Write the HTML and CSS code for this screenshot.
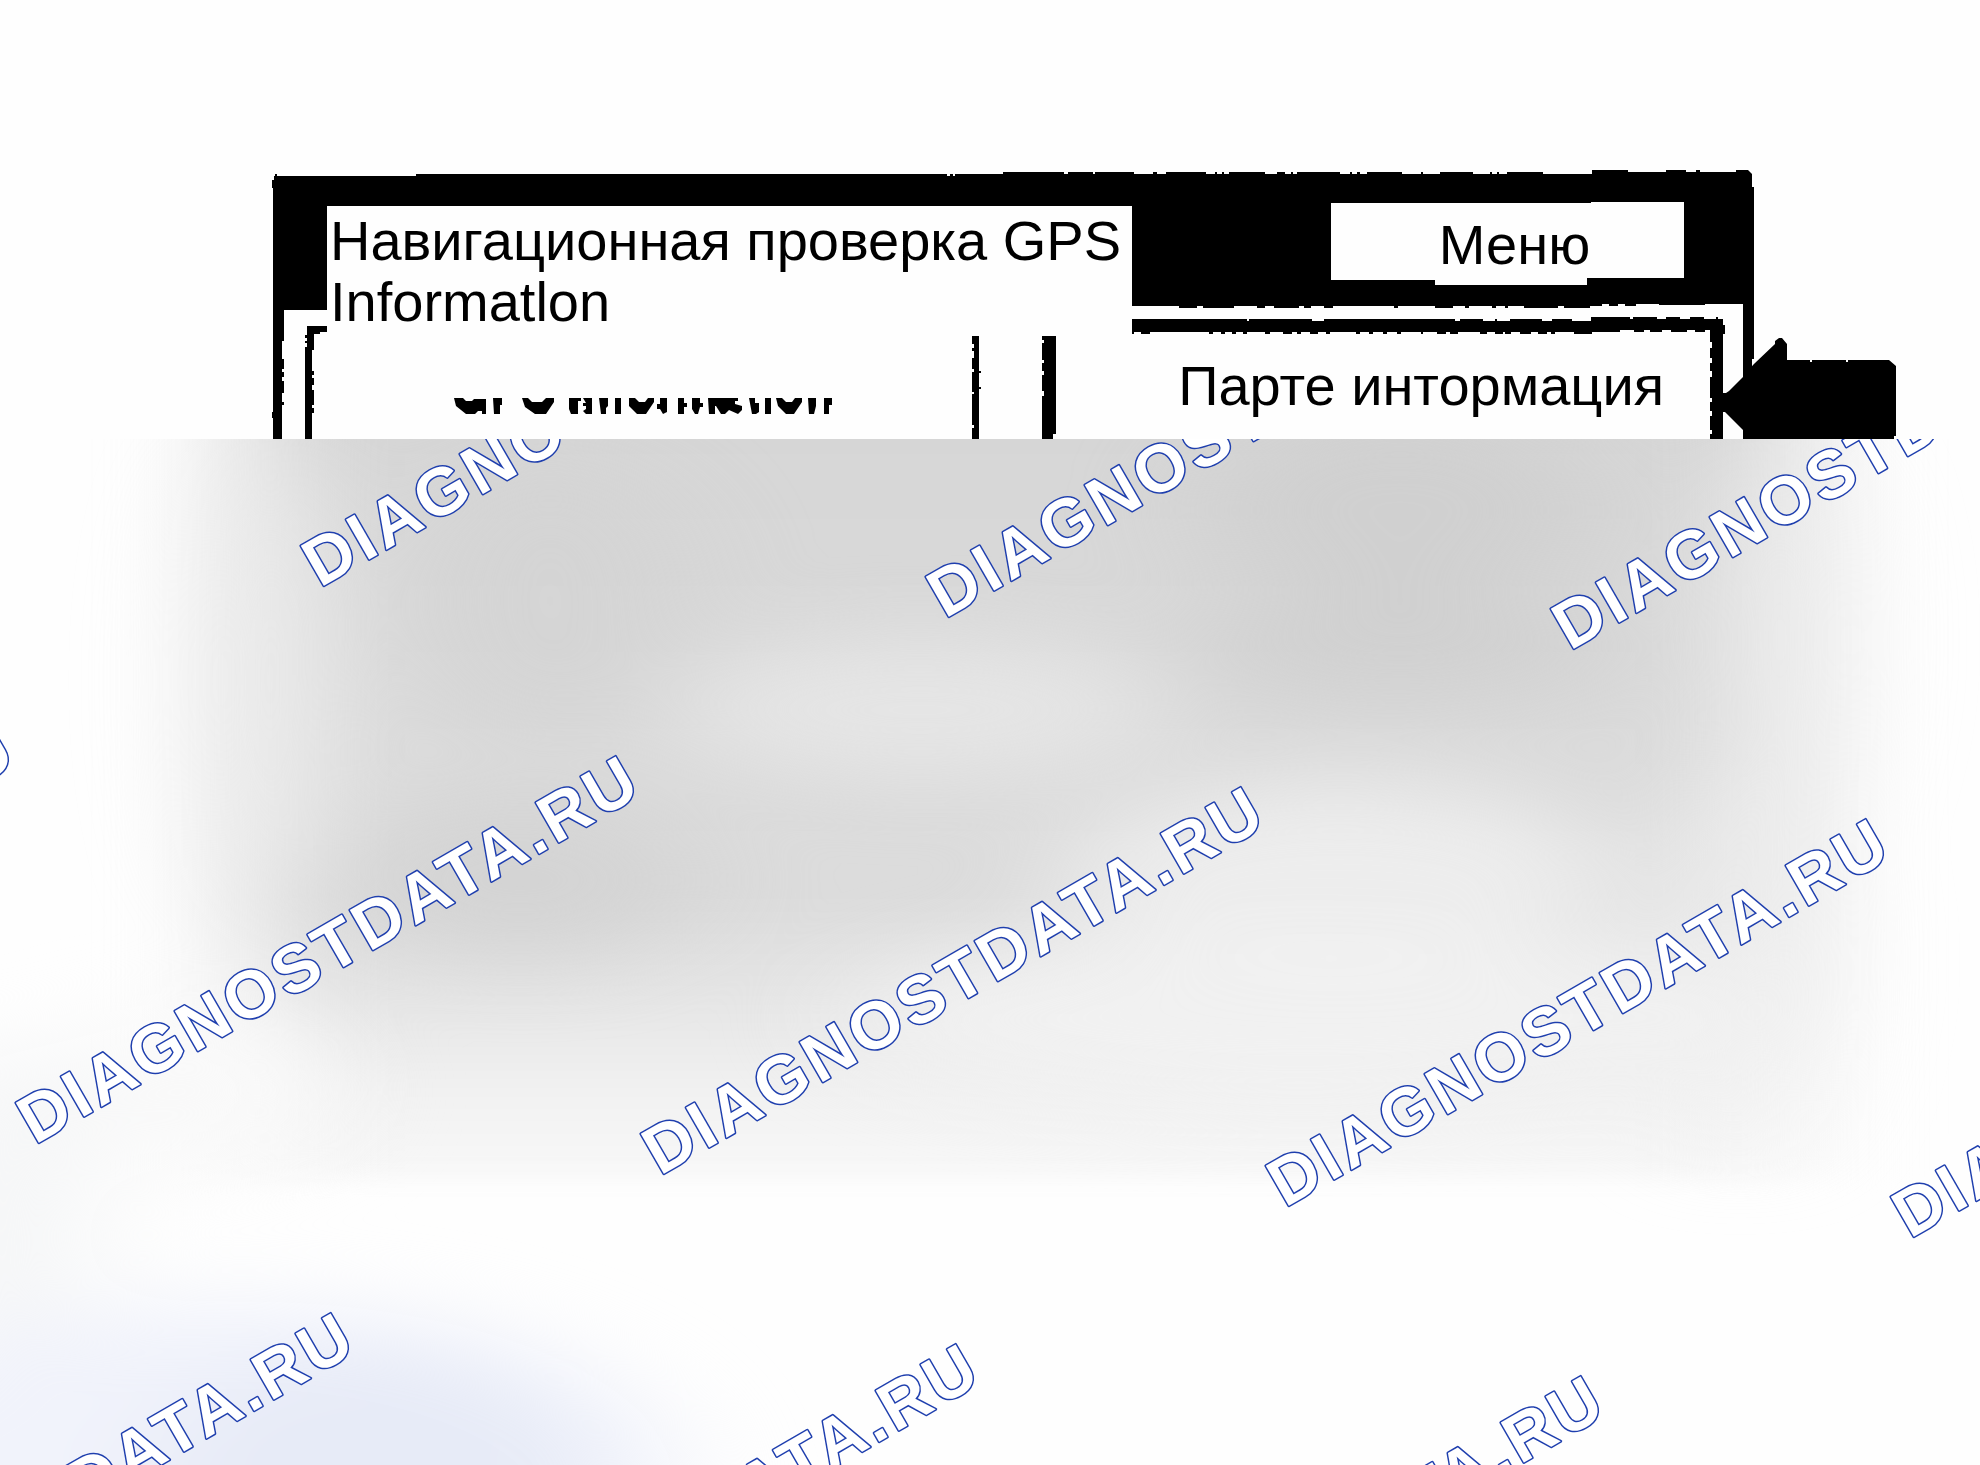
FILE: index.html
```html
<!DOCTYPE html>
<html lang="ru">
<head>
    <meta charset="UTF-8">
    <meta name="viewport" content="width=device-width, initial-scale=1.0">
    <title>Навигационная проверка GPS</title>
    <link rel="stylesheet" href="styles.css">
</head>
<body>

<main class="page">

    <!-- Device screen -->
    <section class="screen">
        <svg class="screen-art" viewBox="272 168 1628 271" preserveAspectRatio="none" aria-hidden="true">
            <!-- outer frame and title bar -->
            <path d="M274 176h1v-2h2v2H416v-2H947v2h3v-2h3v2h2v-2H1003v-2h61v2h4v-2h25v2h2v-2h39v2h19v-2h4v2h9v-2h40v2h9v-2h2v2h5v-2h2v2h5v-2h36v2h12v-2h8v2h6v-2h2v2h4v-2h43v2h10v-2h2v2h5v-2h3v2h7v-2h35v2h19v-2h2v2h17v-2h33v2h17v-2h2v2h5v-2h2v2h8v-2h36v2H1592v-4h36v2h38v-2h20v2h10v-2h4v2H1736v-2h12l4 4v13h2v172h-2v76h-9V304h-38v1h-46v-1h-23v2h-11v-2h-7v2h-9v-2h-7v2H1590v2h-26v-2h-6v2h-34v-2h-16v2h-3v-2h-9v2h-4v-2h-23v2h-4v-2h-12v2h-18v-2h-37v2h-4v-2h-61v2h-9v-2h-13v2h-7v-2h-5v2h-25v-2h-9v2h-8v-2h-23v2h-31v-2h-6v2h-18v-2H1130V300H327v10h-43v31h-2v18h2v10h-2v3h2v5h-2v4h2v12h-2v9h2v3h-2v34h-9v-21h-1v-6h1V188h-1v-8h2z"/>
            <!-- inner frame -->
            <path d="M307 326h20v6h-7v2h-6v16h-2v21h2v4h-2v3h2v7h-2v5h2v15h-2v3h2v5h-2v26h-7v-92h2v-4h-2v-2h2v-3h-2v-3h2z"/>
            <path d="M1132 319h115v2h2v-2h63v2h12v-2h131v2h5v-2h23v2h12v-2h2v2h13v-2h32v2h10v-2h20v2H1591v-4h39v2h3v-2h24v2h9v-2h14v2h10v-2h14v2h12v-2h2v2h5v6h2v9h-2v105h-13v-5h2v-4h-2v-14h2v-5h-2v-9h2v-4h-2v-21h2v-6h-2v-8h2v-5h-2v-10h2v-6h-2v-12h-5v2h-10v-2h-8v2h-16v-2h-9v2h-12v-2h-6v2h-10v-2h-14v2h-28v2h-18v-2h-19v2h-4v-2h-4v2h-9v-2h-7v2h-11v-2h-9v2h-6v-2h-2v2h-8v-2h-8v2h-7v-2h-22v2h-8v-2h-4v2h-9v-2h-14v2h-2v-2h-20v2h-4v-2h-10v2h-4v-2h-10v2h-4v-2h-9v2h-4v-2h-26v2h-4v-2h-8v2h-8v-2h-9v2h-4v-2h-5v2h-9v-2h-13v2h-5v-2h-18v2h-4v-2h-7v2h-4v-2h-7v2h-4v-2h-8v2h-4v-2H1150v2h-9v-2h-7v2h-2z"/>
            <!-- column dividers -->
            <path d="M972 335h7v36h2v2h-2v14h2v2h-2v50h-7v-11h2v-3h-2v-31h2v-2h-2v-20h2v-3h-2v-11h2v-7h-2v-3h2v-4h-2z"/>
            <path d="M1042 335h14v99h-3v5h-11v-43h2v-5h-2v-16h2v-4h-2v-8h2v-3h-2v-17h2v-3h-2z"/>
            <!-- pointer arrow -->
            <path d="M1718 393h8l3-2 16-16 8-10 2-2 20-19v-3l4-3h3l5 6v16h23v2h2v-2h34v2h2v-2h41l7 6v70h-2v3h-151v-9l-18-18h-7z"/>
            <!-- lower half of the old caption -->
            <path d="M454 398h9l3 3h6l2-2h12v15h-4v-3h-4l-3 3h-9l-10-8zM493 398h9v7h-2v9h-6zM522 398h6l4 4h10l4-4h8v4l-8 12h-11l-10-7zM569 398h12v3h-3v13h-7l-2-5zM583 398h9v16h-6l-3-3 3-2v-3h-3v-3h3zM599 398h9v8l-2 2v6h-5zM615 398h6v16h-6zM629 398h6l4 4h6l3-4h6v4l-8 12h-9l-8-8zM660 398h7v14l-4 2-3-5h-3v-5h3zM678 398h6v5h3v4h-3v7h-6zM692 398h8v5h3v4h-3l-2 7h-3l-3-5zM708 398h30v3h-3v3l7 2v4l-4 4-9-4-4 4h-4l-5-8h-1v8h-6zM749 398h6v5h4v9l-3 2h-4zM765 398h6v16h-6zM776 398h6l4 4h6l3-4h7v4l-8 12h-8l-8-8zM808 398h8v8l-2 8h-5zM824 398h8v7h-3v9h-5z"/>
        </svg>

        <header class="title-bar">
            <h1 class="title">Навигационная проверка GPS<br>Informatlon</h1>
            <button type="button" class="menu-button">Меню</button>
        </header>
        <div class="tabs">
            <button type="button" class="tab">Парте интормация</button>
        </div>
    </section>

    <!-- Blurred lower part -->
    <section class="haze">
        <svg class="haze-art" viewBox="0 439 1980 1026" preserveAspectRatio="none" aria-hidden="true">
            <defs>
                <linearGradient id="fade" x1="0" y1="0" x2="0" y2="1">
                    <stop offset="0" stop-color="#d4d4d4"/>
                    <stop offset=".45" stop-color="#dadada"/>
                    <stop offset=".68" stop-color="#dcdcdc"/>
                    <stop offset=".8" stop-color="#e6e6e6"/>
                    <stop offset=".9" stop-color="#f1f1f1"/>
                    <stop offset="1" stop-color="#f8f8f8"/>
                </linearGradient>
                <filter id="wide" x="-20%" y="-20%" width="140%" height="140%" color-interpolation-filters="sRGB">
                    <feGaussianBlur stdDeviation="62 10"/>
                </filter>
                <filter id="soft" x="-60%" y="-100%" width="220%" height="300%" color-interpolation-filters="sRGB">
                    <feGaussianBlur stdDeviation="60 36"/>
                </filter>
            </defs>
            <rect y="439" width="1980" height="1026" fill="#fefefe"/>
            <rect x="240" y="300" width="1560" height="880" fill="url(#fade)" filter="url(#wide)"/>
            <g filter="url(#soft)">
                <ellipse cx="1400" cy="510" rx="200" ry="100" fill="#cecece" opacity=".8"/>
                <ellipse cx="1400" cy="650" rx="220" ry="50" fill="#cecece" opacity=".8"/>
                <ellipse cx="550" cy="600" rx="140" ry="140" fill="#d2d2d2" opacity=".6"/>
                <ellipse cx="920" cy="710" rx="250" ry="70" fill="#e5e5e5"/>
                <ellipse cx="520" cy="880" rx="180" ry="80" fill="#d2d2d2" opacity=".8"/>
                <ellipse cx="1340" cy="880" rx="280" ry="100" fill="#eeeeee" opacity=".9"/>
                <ellipse cx="1300" cy="1020" rx="460" ry="90" fill="#f2f2f2" opacity=".9"/>
                <ellipse cx="1740" cy="960" rx="80" ry="200" fill="#f2f2f2" opacity=".7"/>
                <ellipse cx="270" cy="680" rx="60" ry="240" fill="#ececec" opacity=".8"/>
                <ellipse cx="1780" cy="640" rx="60" ry="200" fill="#eeeeee" opacity=".7"/>
                <ellipse cx="190" cy="1090" rx="140" ry="80" fill="#f9f9f9"/>
                <ellipse cx="0" cy="1220" rx="90" ry="180" fill="#f5f6f7"/>
                <ellipse cx="240" cy="1480" rx="440" ry="180" fill="#f1f3fb"/>
                <ellipse cx="370" cy="1480" rx="220" ry="130" fill="#e7ebf7"/>
            </g>
        </svg>

        <svg class="watermarks" viewBox="0 439 1980 1026" preserveAspectRatio="xMinYMin slice">
            <g class="watermark">
                <text transform="translate(320 588) rotate(-30)">DIAGNOSTDATA.RU</text>
                <text transform="translate(945 619) rotate(-30)">DIAGNOSTDATA.RU</text>
                <text transform="translate(1570 651) rotate(-30)">DIAGNOSTDATA.RU</text>
                <text transform="translate(-590 1114) rotate(-30)">DIAGNOSTDATA.RU</text>
                <text transform="translate(35 1145) rotate(-30)">DIAGNOSTDATA.RU</text>
                <text transform="translate(660 1176) rotate(-30)">DIAGNOSTDATA.RU</text>
                <text transform="translate(1285 1208) rotate(-30)">DIAGNOSTDATA.RU</text>
                <text transform="translate(1910 1239) rotate(-30)">DIAGNOSTDATA.RU</text>
                <text transform="translate(-250 1702) rotate(-30)">DIAGNOSTDATA.RU</text>
                <text transform="translate(375 1733) rotate(-30)">DIAGNOSTDATA.RU</text>
                <text transform="translate(1000 1765) rotate(-30)">DIAGNOSTDATA.RU</text>
            </g>
        </svg>
    </section>

</main>

</body>
</html>
```

FILE: styles.css
```css
* { box-sizing: border-box; }
body {
    margin: 0;
    background: #fefefe;
    color: #000;
    font-family: "Liberation Sans", Arial, sans-serif;
}
.page {
    display: flex;
    flex-direction: column;
    min-height: 100vh;
    padding-top: 168px;
    overflow: hidden;
}

/* device screen */
.screen {
    position: relative;
    margin: 0 80px 0 272px;
    padding: 34px 216px 23px 55px;
}
.screen-art {
    position: absolute;
    top: 0;
    left: 0;
    width: 100%;
    height: 100%;
}
.title-bar {
    position: relative;
    display: flex;
    justify-content: space-between;
    align-items: flex-start;
}
.title {
    margin: 4px 0 0;
    padding: 4px 11px 4px 3px;
    background: #fefefe;
    font-size: 56px;
    line-height: 61px;
    font-weight: normal;
    white-space: nowrap;
}
.menu-button, .tab {
    border: 0;
    background: #fefefe;
    color: #000;
    font-family: inherit;
    font-size: 56px;
    line-height: 61px;
    cursor: pointer;
}
.menu-button {
    width: 353px;
    padding: 12px 0 10px 14px;
    clip-path: polygon(0 1px, 260px 1px, 260px 0, 100% 0, 100% 76px, 256px 76px, 256px 100%, 104px 100%, 104px 78px, 0 78px);
}
.tabs {
    position: relative;
    display: flex;
    justify-content: flex-end;
    padding: 19px 20px 0 0;
}
.tab {
    padding: 0;
    white-space: nowrap;
}

/* blurred area */
.haze {
    position: relative;
    flex: 1;
    min-height: 1026px;
}
.haze-art, .watermarks {
    position: absolute;
    top: 0;
    left: 0;
    width: 100%;
    height: 100%;
}
.watermark {
    fill: #fff;
    stroke: #1f3fae;
    stroke-width: 3px;
    stroke-linejoin: round;
    paint-order: stroke;
    font-size: 67px;
    font-weight: bold;
    letter-spacing: 4px;
}
```
